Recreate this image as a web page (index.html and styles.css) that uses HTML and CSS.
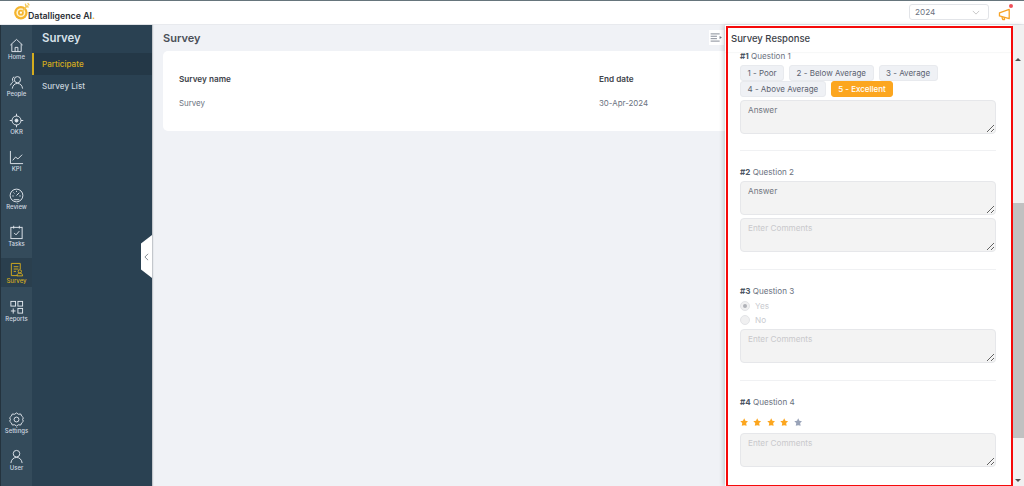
FILE: index.html
```html
<!DOCTYPE html>
<html lang="en">
<head>
<meta charset="utf-8">
<title>Survey</title>
<link rel="stylesheet" href="styles.css">
</head>
<body>
<div class="app">
  <header class="topbar">
    <div class="brand">
      <svg class="brand-mark" viewBox="0 0 16 16" width="18" height="18"><circle cx="7" cy="9.500" r="6" fill="#f5b52e"/><circle cx="7" cy="9.500" r="4" fill="#fff3d0"/><circle cx="7" cy="9.500" r="2.600" fill="#f5b52e"/><circle cx="7" cy="9.500" r="1" fill="#fff"/><path d="M8 8.500 13 3M11 1.500l.5 2.500 2.500.5M13 1l1.500 2" fill="none" stroke="#f3c95a" stroke-width="1.200"/></svg>
      <span class="brand-name">Datalligence AI<span class="brand-dot">.</span></span>
    </div>
    <div class="topbar-right">
      <div class="year-select"><span>2024</span><svg viewBox="0 0 10 6" width="8" height="5"><path d="M1 1l4 4 4-4" fill="none" stroke="#bbb" stroke-width="1"/></svg></div>
      <div class="notify">
        <svg viewBox="0 0 16 14" width="15" height="13"><path d="M1.500 5.200 12 1.500v10L1.500 8.500zM4 9.300 5 12.500h2L6.400 10.100" fill="none" stroke="#f7a325" stroke-width="1.400" stroke-linejoin="round"/></svg>
        <span class="notify-dot"></span>
      </div>
    </div>
  </header>

  <div class="layout">
    <nav class="rail">
      <a class="rail-item"><svg viewBox="0 0 16 16"><path d="M1.500 7.500 8 1.500l6.500 6M3 6.500v8h10v-8M6.500 14.500V10h3v4.500"/></svg><span>Home</span></a>
      <a class="rail-item"><svg viewBox="0 0 16 16"><circle cx="9" cy="5" r="3.300"/><path d="M3.500 14.500c.5-3.500 2.500-5.500 5.500-5.500s5 2 5.500 5.500M5.500 2C3.500 2.500 3 5.500 4.500 7 3 8 2 9.500 1.500 11"/></svg><span>People</span></a>
      <a class="rail-item"><svg viewBox="0 0 16 16"><circle cx="8" cy="8" r="4.800"/><circle cx="8" cy="8" r="1.600" class="solid"/><path d="M8 .8v2.500M8 12.700v2.500M.8 8h2.500M12.700 8h2.500"/></svg><span>OKR</span></a>
      <a class="rail-item"><svg viewBox="0 0 16 16"><path d="M1.500 1v13.500H15M4 11l3-3.500 2.500 2L14 5"/></svg><span>KPI</span></a>
      <a class="rail-item"><svg viewBox="0 0 16 16"><circle cx="8" cy="8" r="6.800"/><path d="M8 8l3-3M3.500 8.500H5M11 8.500h1.500M8 3v1.200M4.800 4.800l1 1M5 12.500h6"/></svg><span>Review</span></a>
      <a class="rail-item"><svg viewBox="0 0 16 16"><rect x="2" y="2.500" width="12" height="12"/><path d="M5 .8v3M11 .8v3M5.500 8.500l2 2 3.500-4"/></svg><span>Tasks</span></a>
      <a class="rail-item is-active"><svg viewBox="0 0 16 16"><path d="M9 14.500H2.500v-13h9.500v6M5 5h5M5 7.500h5M5 10h2.500"/><circle cx="11.500" cy="10" r="1.800"/><path d="M8.500 14.800c0-2 1.300-3 3-3s3 1 3 3z"/></svg><span>Survey</span></a>
      <a class="rail-item"><svg viewBox="0 0 16 16"><rect x="2" y="1.500" width="5" height="5"/><rect x="9.500" y="1.500" width="5" height="5"/><rect x="9.500" y="9" width="5" height="5"/><path d="M4.500 9v5.500M2 11.700h5"/></svg><span>Reports</span></a>
      <div class="rail-spacer"></div>
      <a class="rail-item"><svg viewBox="0 0 16 16"><path d="M8 1l2 1.400 2.500-.3 1 2.300 1.800 1.700L14.500 8l.8 1.900-1.800 1.700-1 2.300-2.500-.3L8 15l-2-1.400-2.500.3-1-2.300L.7 9.900 1.500 8 .7 6.100l1.800-1.700 1-2.300 2.500.3z"/><circle cx="8" cy="8" r="2.600"/></svg><span>Settings</span></a>
      <a class="rail-item"><svg viewBox="0 0 16 16"><circle cx="8" cy="5" r="3.500"/><path d="M2 15c.5-3.800 2.800-6 6-6s5.500 2.200 6 6"/></svg><span>User</span></a>
    </nav>

    <aside class="subnav">
      <h2 class="subnav-title">Survey</h2>
      <a class="subnav-item is-current">Participate</a>
      <a class="subnav-item">Survey List</a>
      <button class="collapse-tab" aria-label="Collapse"><svg viewBox="0 0 6 10" width="5" height="8"><path d="M5 1 1 5l4 4" fill="none" stroke="#66707a" stroke-width="1"/></svg></button>
    </aside>

    <main class="content">
      <div class="content-head">
        <h1 class="page-title">Survey</h1>
        <button class="panel-toggle" aria-label="Toggle panel"><svg viewBox="0 0 14 10" width="13" height="9"><path d="M.5 1h10M.5 3.600h7M.5 6.300h7M.5 9h10" stroke="#6b7280" stroke-width=".9" fill="none"/><path d="M10.500 3.300v3.400L13 5z" fill="#6b7280"/></svg></button>
      </div>
      <section class="card">
        <div class="card-grid">
          <strong>Survey name</strong><strong>End date</strong>
          <span>Survey</span><span>30-Apr-2024</span>
        </div>
      </section>
    </main>
  </div>

  <div class="drawer">
    <div class="panel">
      <div class="panel-head">Survey Response</div>
      <div class="panel-body">
        <div class="question q1">
          <div class="q-label"><b>#1</b> Question 1</div>
          <div class="chips">
            <span class="chip">1 - Poor</span><span class="chip">2 - Below Average</span><span class="chip">3 - Average</span><span class="chip">4 - Above Average</span><span class="chip is-picked">5 - Excellent</span>
          </div>
          <textarea class="field answer" placeholder="Answer" disabled></textarea>
        </div>
        <div class="question q2">
          <div class="q-label"><b>#2</b> Question 2</div>
          <textarea class="field answer" placeholder="Answer" disabled></textarea>
          <textarea class="field" placeholder="Enter Comments" disabled></textarea>
        </div>
        <div class="question q3">
          <div class="q-label"><b>#3</b> Question 3</div>
          <div class="radios">
            <div class="radio is-on"><i></i>Yes</div>
            <div class="radio"><i></i>No</div>
          </div>
          <textarea class="field" placeholder="Enter Comments" disabled></textarea>
        </div>
        <div class="question q4">
          <div class="q-label"><b>#4</b> Question 4</div>
          <div class="stars">
            <svg viewBox="0 0 10 10" class="star on"><path d="M5 .4l1.400 3 3.300.4-2.400 2.200.6 3.300L5 8.700 2.100 9.300l.6-3.300L.3 3.800l3.300-.4z"/></svg>
            <svg viewBox="0 0 10 10" class="star on"><path d="M5 .4l1.400 3 3.300.4-2.400 2.200.6 3.300L5 8.700 2.100 9.300l.6-3.300L.3 3.800l3.300-.4z"/></svg>
            <svg viewBox="0 0 10 10" class="star on"><path d="M5 .4l1.400 3 3.300.4-2.400 2.200.6 3.300L5 8.700 2.100 9.300l.6-3.300L.3 3.800l3.300-.4z"/></svg>
            <svg viewBox="0 0 10 10" class="star on"><path d="M5 .4l1.400 3 3.300.4-2.400 2.200.6 3.300L5 8.700 2.100 9.300l.6-3.300L.3 3.800l3.300-.4z"/></svg>
            <svg viewBox="0 0 10 10" class="star"><path d="M5 .4l1.400 3 3.300.4-2.400 2.200.6 3.300L5 8.700 2.100 9.300l.6-3.300L.3 3.800l3.300-.4z"/></svg>
          </div>
          <textarea class="field" placeholder="Enter Comments" disabled></textarea>
        </div>
      </div>
    </div>
    <div class="scrollbar">
      <span class="arrow up"></span>
      <div class="track"><div class="thumb"></div></div>
      <span class="arrow down"></span>
    </div>
    <div class="highlight"></div>
  </div>
</div>
</body>
</html>
```
FILE: styles.css
```css
* { box-sizing: border-box; }
html, body { margin: 0; height: 486px; overflow: hidden; }
body { font-family: Inter, "Liberation Sans", sans-serif; color: #4b5563; background: #f0f2f6; }

.app { position: relative; height: 486px; display: flex; flex-direction: column; border-top: 1px solid #66757c; }

.topbar { height: 24px; flex: none; background: #fff; display: flex; align-items: center; justify-content: space-between; padding: 0 11px 1px 13px; border-bottom: 1px solid #e8eaee; }
.brand { display: flex; align-items: flex-start; }
.brand-mark { margin-top: -1px; }
.brand-name { font-size: 8.800px; font-weight: 600; color: #2b2f36; margin: 7.500px 0 0 -3px; }
.brand-dot { color: #f5b52e; font-weight: 800; }
.topbar-right { display: flex; align-items: center; gap: 9px; }
.year-select { width: 80px; height: 16px; border: 1px solid #e2e4e8; border-radius: 3px; display: flex; align-items: center; justify-content: space-between; padding: 0 8px 0 5px; font-size: 8.200px; color: #6b7280; }
.notify { position: relative; width: 15px; height: 14px; }
.notify-dot { position: absolute; top: -1px; right: 0; width: 4px; height: 4px; border-radius: 50%; background: #f0505a; }

.layout { flex: 1; display: flex; min-height: 0; }

.rail { width: 32px; flex: none; background: #344b5b; border-left: 1px solid #24333e; display: flex; flex-direction: column; padding: 9px 0 12px; }
.rail-item { height: 29px; margin-bottom: 8.400px; flex: none; display: flex; flex-direction: column; align-items: center; color: #cfd8e0; font-size: 6px; line-height: 7px; font-weight: 500; padding-top: 4px; }
.rail-item:last-child { margin-bottom: 0; }
.rail-item svg { width: 15px; height: 15px; fill: none; stroke: #e2e8ee; stroke-width: 1; flex: none; }
.rail-item svg .solid { fill: #e2e8ee; }
.rail-item.is-active { background: #2a3f4e; color: #d4ac1e; }
.rail-item.is-active svg { stroke: #d4ac1e; }
.rail-spacer { flex: 1; }

.subnav { position: relative; width: 120px; flex: none; background: #2a4152; box-shadow: 1px 0 1px rgba(60, 70, 80, .25); }
.subnav-title { margin: 0; font-size: 11.400px; font-weight: 600; color: #d8e1ea; padding: 6px 0 0 10px; height: 28px; line-height: 14px; }
.subnav-item { display: flex; align-items: center; height: 22px; padding-left: 10px; font-size: 8.100px; font-weight: 500; color: #c9d4dd; }
.subnav-item.is-current { background: #243847; color: #d4ac1e; border-left: 2px solid #d4ac1e; padding-left: 8px; }
.collapse-tab { position: absolute; top: 210px; right: 0; width: 11px; height: 43px; padding: 0; border: 0; background: #fff; clip-path: polygon(100% 0, 100% 100%, 0 80%, 0 20%); display: flex; align-items: center; justify-content: center; }

.content { flex: 1; min-width: 0; padding: 0 12px 0 11px; }
.content-head { height: 26px; display: flex; align-items: center; justify-content: space-between; padding-right: 288px; }
.page-title { margin: 0; font-size: 11px; font-weight: 600; color: #4a4f57; }
.panel-toggle { width: 15px; height: 15px; padding: 0; border: 0; background: #fff; display: flex; align-items: center; justify-content: center; margin-top: -1px; }
.card { background: #fff; border-radius: 5px; height: 80px; padding: 23px 16px 0; }
.card-grid { display: grid; grid-template-columns: 420px 1fr; row-gap: 14px; font-size: 7.900px; line-height: 10px; color: #6b7280; }
.card-grid strong { font-size: 8.200px; font-weight: 600; color: #3d4249; }

.drawer { position: absolute; top: 24px; left: 725px; right: 0; bottom: 0; display: flex; box-shadow: -2px 0 4px rgba(60, 70, 80, .2); }
.panel { flex: 1; background: #fff; display: flex; flex-direction: column; min-width: 0; }
.panel-head { height: 27px; flex: none; padding: 6.500px 0 0 6px; font-size: 9.500px; line-height: 14px; font-weight: 500; color: #3d4249; box-shadow: 0 1px 1px rgba(120, 130, 140, .06); position: relative; }
.panel-body { flex: 1; padding: 0 16px 0 15px; overflow: hidden; }

.question { border-bottom: 1px solid #f0f1f3; }
.question:last-child { border-bottom: 0; }
.q1 { height: 100.500px; margin-top: -2px; }
.q2 { height: 119px; padding-top: 15px; }
.q3 { height: 111px; padding-top: 15px; }
.q4 { padding-top: 15px; }
.q-label { font-size: 8.100px; line-height: 12px; color: #6b7280; height: 15px; }
.q-label b { color: #4b5563; font-weight: 700; }
.q4 .q-label { height: 20.500px; }

.chips { display: flex; flex-wrap: wrap; column-gap: 5px; margin-bottom: 3px; }
.chip { height: 16px; padding: 0 6.500px; border: 1px solid #e8eaee; border-radius: 3px; background: #eff1f5; font-size: 8px; line-height: 14px; color: #5b6270; }
.chip.is-picked { background: #fca61f; border-color: #fca61f; color: #fff; font-weight: 500; }

.field { display: block; width: 100%; height: 34px; padding: 3px 7px; border: 1px solid #e6e7ea; border-radius: 4px; background: #f3f3f3; font: 8.200px/12px Inter, "Liberation Sans", sans-serif; margin: 0 0 3.500px; resize: vertical; outline: 0; }
.field::placeholder { color: #c9c9cc; opacity: 1; }
.field.answer::placeholder { color: #71767f; }

.radios { display: flex; flex-direction: column; margin-bottom: 3px; }
.radio { height: 13.400px; display: flex; align-items: center; gap: 5px; font-size: 8.200px; color: #c9cbd0; }
.radio i { width: 10px; height: 10px; border-radius: 50%; background: #f0f0f1; border: 1px solid #e3e4e7; display: flex; align-items: center; justify-content: center; }
.radio.is-on i::after { content: ""; width: 4px; height: 4px; border-radius: 50%; background: #b0b2b8; }

.stars { display: flex; gap: 5px; height: 17px; padding-top: 2px; }
.star { width: 8.400px; height: 8.400px; fill: #99a3b8; flex: none; }
.star.on { fill: #fca61f; }

.scrollbar { width: 12px; flex: none; background: #f1f1f1; display: flex; flex-direction: column; align-items: center; }
.arrow { width: 0; height: 0; border-left: 3px solid transparent; border-right: 3px solid transparent; flex: none; }
.arrow.up { border-bottom: 3.500px solid #505050; margin: 33px 0 0; }
.arrow.down { border-top: 3.500px solid #505050; margin: 0 0 4px; }
.track { flex: 1; width: 100%; padding-top: 142px; padding-bottom: 41px; }
.thumb { height: 100%; background: #c1c1c1; }

.highlight { position: absolute; top: 1px; left: 1px; width: 287px; height: 461px; border: 2.500px solid #f50a0a; pointer-events: none; }
```
